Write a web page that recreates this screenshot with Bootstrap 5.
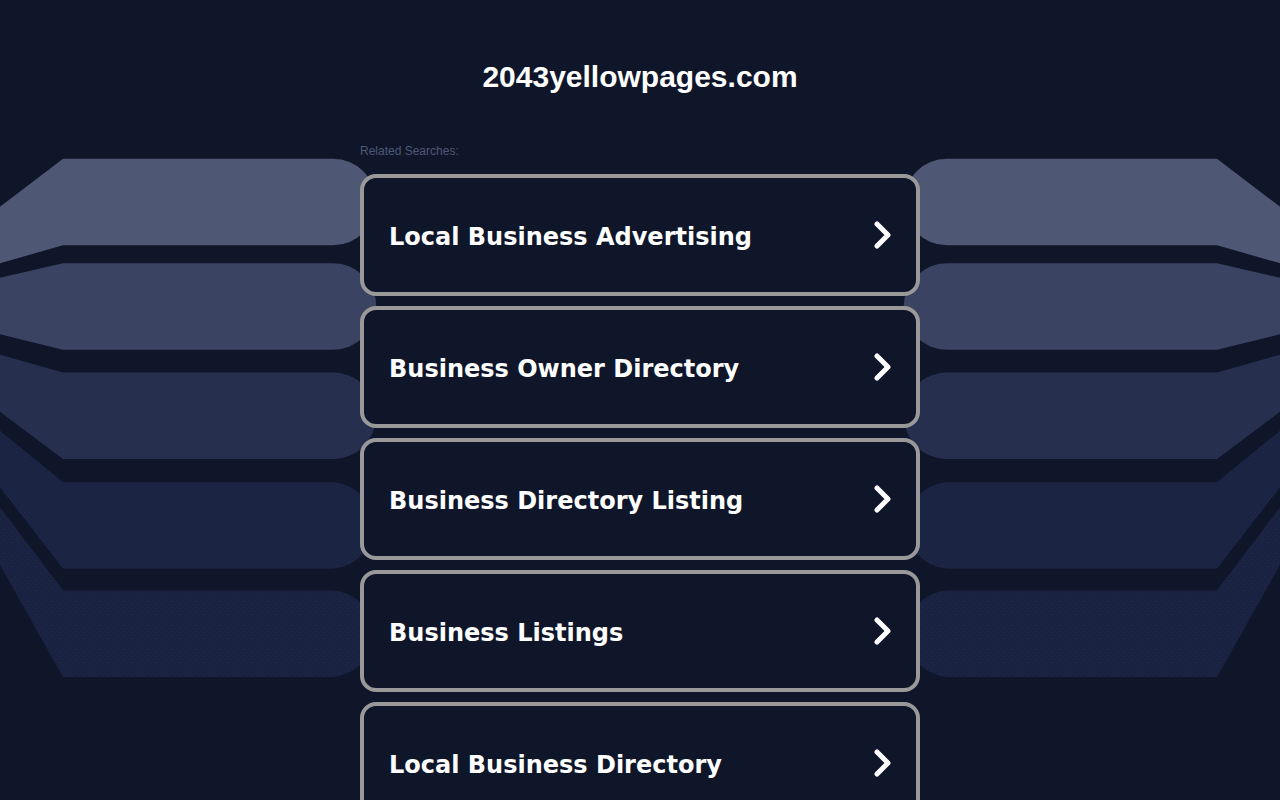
<!DOCTYPE html>
<html lang="en">
<head>
<meta charset="utf-8">
<meta name="viewport" content="width=device-width, initial-scale=1">
<title>2043yellowpages.com</title>
<link href="https://cdn.jsdelivr.net/npm/bootstrap@5.3.0/dist/css/bootstrap.min.css" rel="stylesheet">
<style>
  body { background: #10162a; font-family: "Liberation Sans", Arial, sans-serif; }
  .page-wrap { min-height: 100vh; }
  .site-name { font-size: 30px; line-height: 36px; padding: 59px 0 49px; }
  .results { max-width: 560px; }
  .results-label { font-size: 12px; line-height: 14px; color: #4e5875; margin-bottom: 16px; }
  .result-list { gap: 10px; }
  .result-link {
    min-height: 122px; padding: 0 24px 0 25px;
    border: 4px solid #999; border-radius: 16px; background: #10162a;
    font: bold 24px/32px "DejaVu Sans", Verdana, sans-serif;
  }
  .result-link span { padding-top: 3px; }
  .result-link:hover { border-color: #fff; }
</style>
</head>
<body>
<div class="page-wrap position-relative overflow-hidden">
  <svg class="position-absolute top-0 start-0 w-100" viewBox="0 0 1280 800" aria-hidden="true">
    <defs>
      <pattern id="light-dots" width="4" height="4" patternUnits="userSpaceOnUse">
        <rect width="4" height="4" fill="#1a2342"/>
        <path d="M0 0h1v1h-1zM2 2h1v1h-1z" fill="#202a49"/>
      </pattern>
      <pattern id="dark-dots" width="6" height="6" patternUnits="userSpaceOnUse">
        <rect width="6" height="6" fill="#1a2342"/>
        <path d="M0 0h1v1h-1zM3 3h1v1h-1z" fill="#141b35"/>
      </pattern>
      <g id="wing">
        <path fill="#4e5773" d="M-1 207.500L63 158.700H333a43.300 43.300 0 0 1 0 86.600H63L-1 263.500z"/>
        <path fill="#3b4363" d="M-1 278L63 263.200H333a43.300 43.300 0 0 1 0 86.600H63L-1 334z"/>
        <path fill="#262f4e" d="M-1 354.500L63 372.500H333a43.300 43.300 0 0 1 0 86.600H63L-1 411z"/>
        <path fill="url(#light-dots)" d="M-1 430L63 482.200H333a43.300 43.300 0 0 1 0 86.400H63L-1 486z"/>
        <path fill="url(#dark-dots)" d="M-1 506L63 590.500H333a43.300 43.300 0 0 1 0 86.400H63L-1 563z"/>
      </g>
    </defs>
    <use href="#wing"/>
    <use href="#wing" transform="matrix(-1 0 0 1 1280 0)"/>
    <symbol id="chevron" viewBox="0 0 18 28"><path d="M3 3L14 14L3 25" fill="none" stroke="#fff" stroke-width="5" stroke-linecap="round" stroke-linejoin="round"/></symbol>
  </svg>
  <header class="position-relative text-center text-white">
    <h1 class="site-name fw-bold m-0">2043yellowpages.com</h1>
  </header>
  <main class="results position-relative mx-auto pb-4">
    <p class="results-label">Related Searches:</p>
    <nav class="result-list d-flex flex-column" aria-label="Related searches">
      <a class="result-link d-flex align-items-center justify-content-between text-white text-decoration-none" href="#"><span>Local Business Advertising</span><svg width="18" height="28" aria-hidden="true"><use href="#chevron"/></svg></a>
      <a class="result-link d-flex align-items-center justify-content-between text-white text-decoration-none" href="#"><span>Business Owner Directory</span><svg width="18" height="28" aria-hidden="true"><use href="#chevron"/></svg></a>
      <a class="result-link d-flex align-items-center justify-content-between text-white text-decoration-none" href="#"><span>Business Directory Listing</span><svg width="18" height="28" aria-hidden="true"><use href="#chevron"/></svg></a>
      <a class="result-link d-flex align-items-center justify-content-between text-white text-decoration-none" href="#"><span>Business Listings</span><svg width="18" height="28" aria-hidden="true"><use href="#chevron"/></svg></a>
      <a class="result-link d-flex align-items-center justify-content-between text-white text-decoration-none" href="#"><span>Local Business Directory</span><svg width="18" height="28" aria-hidden="true"><use href="#chevron"/></svg></a>
    </nav>
  </main>
</div>
<script src="https://cdn.jsdelivr.net/npm/bootstrap@5.3.0/dist/js/bootstrap.bundle.min.js"></script>
</body>
</html>
